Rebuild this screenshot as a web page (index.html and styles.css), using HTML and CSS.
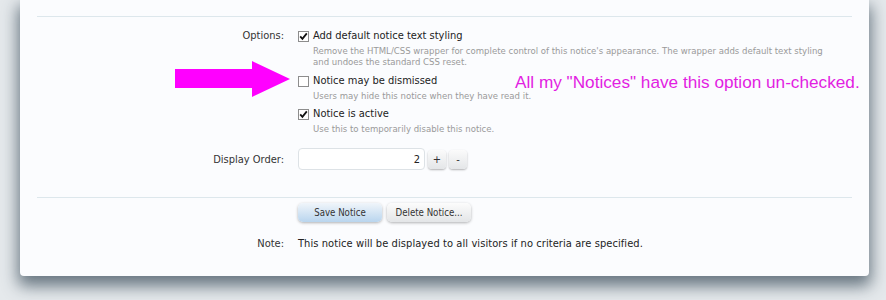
FILE: index.html
```html
<!DOCTYPE html>
<html>
<head>
<meta charset="utf-8">
<link rel="stylesheet" href="styles.css">
</head>
<body>
<div class="panel">
  <div class="rule"></div>
  <div class="row options-row">
    <div class="label">Options:</div>
    <div class="control">
      <div class="opt">
        <div class="check-line"><span class="cb checked"><svg viewBox="0 0 11 11" width="11" height="11"><path d="M2.2 5.4 L4.4 7.8 L8.8 2.4" fill="none" stroke="#111" stroke-width="1.8"/></svg></span>Add default notice text styling</div>
        <div class="hint">Remove the HTML/CSS wrapper for complete control of this notice's appearance. The wrapper adds default text styling<br>and undoes the standard CSS reset.</div>
      </div>
      <div class="opt">
        <div class="check-line"><span class="cb"></span>Notice may be dismissed</div>
        <div class="hint">Users may hide this notice when they have read it.</div>
      </div>
      <div class="opt">
        <div class="check-line"><span class="cb checked"><svg viewBox="0 0 11 11" width="11" height="11"><path d="M2.2 5.4 L4.4 7.8 L8.8 2.4" fill="none" stroke="#111" stroke-width="1.8"/></svg></span>Notice is active</div>
        <div class="hint">Use this to temporarily disable this notice.</div>
      </div>
    </div>
  </div>
  <div class="row order-row">
    <div class="label">Display Order:</div>
    <div class="control spin">
      <div class="num">2</div>
      <div class="sbtn">+</div>
      <div class="sbtn">-</div>
    </div>
  </div>
  <div class="rule rule2"></div>
  <div class="row btn-row">
    <div class="label"></div>
    <div class="control buttons">
      <div class="btn primary">Save Notice</div>
      <div class="btn">Delete Notice...</div>
    </div>
  </div>
  <div class="row note-row">
    <div class="label">Note:</div>
    <div class="control note">This notice will be displayed to all visitors if no criteria are specified.</div>
  </div>

  <svg class="arrow" width="120" height="40" viewBox="0 0 120 40"><polygon points="0,8 77,8 77,0 115,18 77,36 77,27 0,27" fill="#ff00ff"/></svg>
  <div class="annotation">All my "Notices" have this option un-checked.</div>
</div>
</body>
</html>
```
FILE: styles.css
```css
html, body {
  margin: 0;
  padding: 0;
}
body {
  width: 886px;
  height: 300px;
  overflow: hidden;
  background: #e5e9ec;
  font-family: "DejaVu Sans Condensed", "DejaVu Sans", sans-serif;
  font-stretch: condensed;
  color: #222;
}
.panel {
  position: relative;
  margin-left: 20px;
  width: 849px;
  height: 276px;
  box-sizing: border-box;
  padding: 16px 17px 0 17px;
  background: #fbfcfe;
  border-radius: 0 0 4px 4px;
  box-shadow: 0 8px 16px 2px rgba(50, 68, 82, 0.7);
}
.rule {
  border-top: 1px solid #dde7ec;
}
.row {
  display: flex;
  align-items: flex-start;
}
.label {
  width: 247px;
  text-align: right;
  font-size: 11px;
  line-height: 16px;
  color: #333;
  flex: none;
}
.control {
  margin-left: 14px;
  font-size: 11px;
  line-height: 16px;
  color: #222;
}
.options-row {
  margin-top: 11px;
}
.opt {
  margin-bottom: 6px;
}
.opt + .opt {
  margin-bottom: 5px;
}
.check-line {
  display: flex;
  align-items: center;
  height: 16px;
}
.cb {
  width: 11px;
  height: 11px;
  box-sizing: border-box;
  border: 1px solid #8d8d8d;
  background: #fff;
  margin-right: 4px;
  position: relative;
  flex: none;
}
.cb svg {
  position: absolute;
  left: -1px;
  top: -1px;
}
.hint {
  margin-left: 15px;
  font-size: 9.5px;
  line-height: 11px;
  color: #9a9a9a;
  padding-top: 1px;
}
.order-row {
  margin-top: 9px;
}
.order-row .label {
  padding-top: 4px;
}
.spin {
  display: flex;
  align-items: center;
  gap: 3px;
}
.num {
  width: 127px;
  height: 22px;
  box-sizing: border-box;
  border: 1px solid #dde2e6;
  border-radius: 4px;
  background: #fff;
  text-align: right;
  padding-right: 4px;
  line-height: 21px;
  font-size: 11px;
}
.sbtn {
  width: 18px;
  height: 19px;
  border-radius: 4px;
  background: linear-gradient(#fbfbfb, #e4e6e8);
  box-shadow: 0 1px 2px rgba(0,0,0,0.3);
  text-align: center;
  line-height: 19px;
  font-size: 11px;
  color: #333;
}
.rule2 {
  margin-top: 27px;
}
.btn-row {
  margin-top: 5px;
}
.buttons {
  display: flex;
  gap: 5px;
}
.btn {
  height: 19px;
  line-height: 19px;
  width: 84px;
  text-align: center;
  border-radius: 5px;
  font-size: 9.6px;
  color: #333;
  background: linear-gradient(#fcfcfc, #e3e5e7);
  box-shadow: 0 1px 3px rgba(0,0,0,0.3);
}
.btn.primary {
  background: linear-gradient(#f0f5fa, #b9d5ee);
}
.note-row {
  margin-top: 14px;
}
.note {
  letter-spacing: 0.08px;
}
.arrow {
  position: absolute;
  left: 155px;
  top: 61px;
}
.annotation {
  position: absolute;
  left: 495px;
  top: 72px;
  font-family: "Liberation Sans", Arial, sans-serif;
  font-stretch: normal;
  font-size: 17.2px;
  color: #e21ee2;
  white-space: nowrap;
}
```
